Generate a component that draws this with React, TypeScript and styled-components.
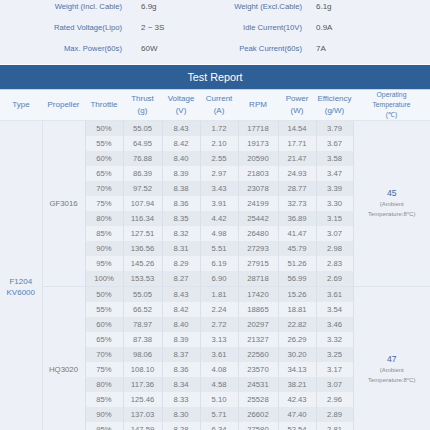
import React from 'react';
import styled, { createGlobalStyle } from 'styled-components';

const GlobalStyle = createGlobalStyle`
  html, body {
    margin: 0;
    padding: 0;
    background: #eef2f8;
    overflow: hidden;
  }
  body {
    font-family: "Liberation Sans", Arial, sans-serif;
  }
`

type Row = [string, string, string, string, string, string, string]

const groups: { prop: string; temp: string; rows: Row[] }[] = [
  {
    prop: 'GF3016',
    temp: '45',
    rows: [
      ['50%', '55.05', '8.43', '1.72', '17718', '14.54', '3.79'],
      ['55%', '64.95', '8.42', '2.10', '19173', '17.71', '3.67'],
      ['60%', '76.88', '8.40', '2.55', '20590', '21.47', '3.58'],
      ['65%', '86.39', '8.39', '2.97', '21803', '24.93', '3.47'],
      ['70%', '97.52', '8.38', '3.43', '23078', '28.77', '3.39'],
      ['75%', '107.94', '8.36', '3.91', '24199', '32.73', '3.30'],
      ['80%', '116.34', '8.35', '4.42', '25442', '36.89', '3.15'],
      ['85%', '127.51', '8.32', '4.98', '26480', '41.47', '3.07'],
      ['90%', '136.56', '8.31', '5.51', '27293', '45.79', '2.98'],
      ['95%', '145.26', '8.29', '6.19', '27915', '51.26', '2.83'],
      ['100%', '153.53', '8.27', '6.90', '28718', '56.99', '2.69'],
    ],
  },
  {
    prop: 'HQ3020',
    temp: '47',
    rows: [
      ['50%', '55.05', '8.43', '1.81', '17420', '15.26', '3.61'],
      ['55%', '66.52', '8.42', '2.24', '18865', '18.81', '3.54'],
      ['60%', '78.97', '8.40', '2.72', '20297', '22.82', '3.46'],
      ['65%', '87.38', '8.39', '3.13', '21327', '26.29', '3.32'],
      ['70%', '98.06', '8.37', '3.61', '22560', '30.20', '3.25'],
      ['75%', '108.10', '8.36', '4.08', '23570', '34.13', '3.17'],
      ['80%', '117.36', '8.34', '4.58', '24531', '38.21', '3.07'],
      ['85%', '125.46', '8.33', '5.10', '25528', '42.43', '2.96'],
      ['90%', '137.03', '8.30', '5.71', '26602', '47.40', '2.89'],
      ['95%', '147.59', '8.28', '6.34', '27580', '52.54', '2.81'],
      ['100%', '156.12', '8.26', '7.02', '28496', '57.98', '2.69'],
    ],
  },
]

const specs = [
  ['Weight (Incl. Cable)', '6.9g', 'Weight (Excl.Cable)', '6.1g'],
  ['Rated Voltage(Lipo)', '2 ~ 3S', 'Idle Current(10V)', '0.9A'],
  ['Max. Power(60s)', '60W', 'Peak Current(60s)', '7A'],
]

const widths = [42, 43, 38, 39, 38, 38, 40, 38, 37, 77]

export default function App() {
  return (
    <Page>
      <GlobalStyle />
      <Specs>
        {specs.map((s) => (
          <React.Fragment key={s[0]}>
            <SpecLabel>{s[0]}</SpecLabel>
            <SpecValue $pad={19}>{s[1]}</SpecValue>
            <SpecLabel>{s[2]}</SpecLabel>
            <SpecValue $pad={14}>{s[3]}</SpecValue>
          </React.Fragment>
        ))}
      </Specs>
      <TitleBar>Test Report</TitleBar>
      <Table>
        <colgroup>
          {widths.map((w, i) => <col key={i} style={{ width: w }} />)}
        </colgroup>
        <thead>
          <tr>
            <Th>Type</Th>
            <Th>Propeller</Th>
            <Th>Throttle</Th>
            <Th>Thrust<br />(g)</Th>
            <Th>Voltage<br />(V)</Th>
            <Th>Current<br />(A)</Th>
            <Th>RPM</Th>
            <Th>Power<br />(W)</Th>
            <Th>Efficiency<br />(g/W)</Th>
            <Th $tight>Operating<br />Temperature<br />(℃)</Th>
          </tr>
        </thead>
        <tbody>
          {groups.map((g, gi) =>
            g.rows.map((r, ri) => (
              <tr key={`${gi}-${ri}`}>
                {gi === 0 && ri === 0 && (
                  <TypeCell rowSpan={22}>F1204<br />KV6000</TypeCell>
                )}
                {ri === 0 && (
                  <PropCell rowSpan={g.rows.length} $first={gi === 0}>{g.prop}</PropCell>
                )}
                {r.map((v, ci) => (
                  <Td key={ci} $dark={ri % 2 === 0} $first={gi > 0 && ri === 0}>{v}</Td>
                ))}
                {ri === 0 && (
                  <TempCell rowSpan={g.rows.length} $first={gi === 0}>
                    <TempValue>{g.temp}</TempValue>
                    <Ambient>(Ambient<br />Temperature:8°C)</Ambient>
                  </TempCell>
                )}
              </tr>
            ))
          )}
        </tbody>
      </Table>
    </Page>
  )
}

const Page = styled.div`
  width: 430px;
  height: 430px;
  overflow: hidden;
  background: #eef2f8;
`

const Specs = styled.div`
  display: grid;
  grid-template-columns: 122px 93px 87px 1fr;
  grid-auto-rows: 21px;
  align-items: center;
  height: 68px;
  margin-top: -4px;
  box-sizing: border-box;
`

const SpecLabel = styled.div`
  text-align: right;
  font-size: 7.7px;
  color: #4f70a6;
  white-space: nowrap;
`

const SpecValue = styled.div<{ $pad: number }>`
  padding-left: ${(p) => p.$pad}px;
  font-size: 8px;
  color: #555;
`

const TitleBar = styled.div`
  height: 24px;
  border-top: 1px solid #fbfcfe;
  border-bottom: 1px solid #c6d3e3;
  background: #2f5f97;
  color: #fff;
  font-size: 10.8px;
  display: flex;
  align-items: center;
  justify-content: center;
`

const Table = styled.table`
  width: 430px;
  table-layout: fixed;
  border-collapse: collapse;
  border-spacing: 0;
`

const Th = styled.th<{ $tight?: boolean }>`
  height: 30px;
  padding: 0;
  background: #f3f6fa;
  color: #5180ba;
  font-weight: normal;
  font-size: ${(p) => (p.$tight ? '6.8px' : '8px')};
  line-height: ${(p) => (p.$tight ? '10px' : '12px')};
  text-align: center;
  vertical-align: middle;
  border-bottom: 1px solid #e0e6ee;
`

const TypeCell = styled.td`
  padding: 0;
  text-align: center;
  vertical-align: middle;
  font-size: 8px;
  line-height: 11px;
  color: #4f7fba;
  background: #edf1f7;
  border-right: 1px solid #dce3ec;
`

const PropCell = styled.td<{ $first: boolean }>`
  padding: 0;
  text-align: center;
  vertical-align: middle;
  font-size: 7.8px;
  color: #777;
  background: #edf1f7;
  border-top: ${(p) => (p.$first ? 'none' : '1px solid #dce3ec')};
`

const Td = styled.td<{ $dark: boolean; $first: boolean }>`
  height: 15px;
  padding: 0;
  text-align: center;
  vertical-align: middle;
  font-size: 7.7px;
  color: #777;
  background: ${(p) => (p.$dark ? '#e4e9f0' : '#eef2f7')};
  border-left: 1px solid #d9e0e9;
  border-right: 1px solid #d9e0e9;
  border-top: ${(p) => (p.$first ? '1px solid #dce3ec' : 'none')};
`

const TempCell = styled.td<{ $first: boolean }>`
  padding: 0;
  text-align: center;
  vertical-align: middle;
  background: #edf1f7;
  border-top: ${(p) => (p.$first ? 'none' : '1px solid #dce3ec')};
`

const TempValue = styled.div`
  font-size: 8.6px;
  line-height: 11px;
  color: #3e68a3;
`

const Ambient = styled.div`
  font-size: 6px;
  line-height: 10px;
  color: #8a8a8a;
`
